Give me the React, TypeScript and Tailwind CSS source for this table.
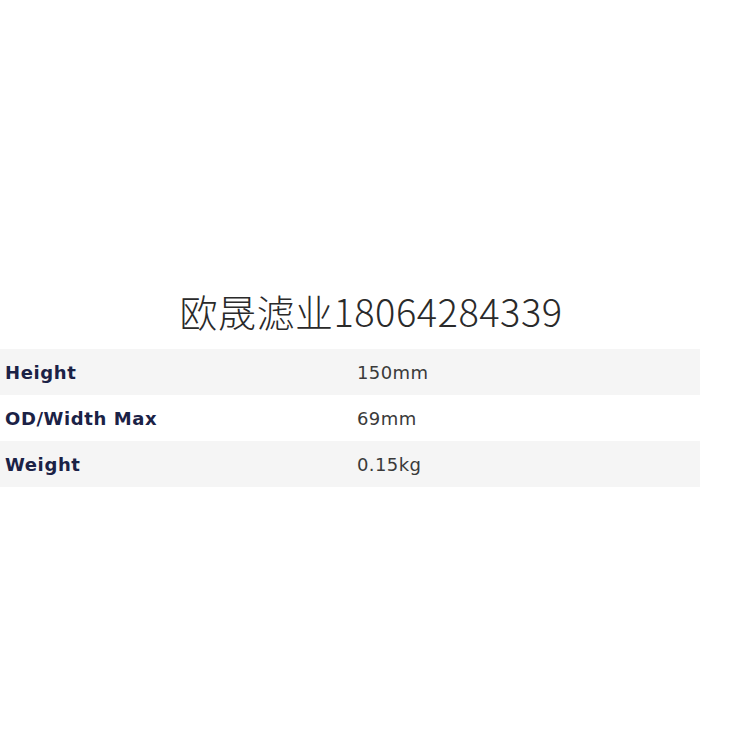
const specs = [
  { label: "Height", value: "150mm" },
  { label: "OD/Width Max", value: "69mm" },
  { label: "Weight", value: "0.15kg" },
];

export default function App() {
  return (
    <div className="h-[742px] w-[742px] overflow-hidden bg-white pt-[283px]">
      {/* watermark */}
      <p
        className="text-center text-[38px] font-light leading-[56px] tracking-[0.5px] text-[#2a2a2a]"
        style={{ fontFamily: '"Noto Sans CJK SC", sans-serif' }}
      >
        欧晟滤业18064284339
      </p>

      <table
        className="mt-[10px] w-[700px] border-collapse"
        style={{ fontFamily: '"DejaVu Sans", sans-serif' }}
      >
        <tbody>
          {specs.map((row, i) => (
            <tr key={row.label} className={i % 2 === 0 ? "bg-[#f5f5f5]" : "bg-white"}>
              <td className="h-[46px] w-[352px] pl-[5px] text-[18px] font-bold tracking-[0.6px] text-[#1b2246]">
                {row.label}
              </td>
              <td className="h-[46px] pl-[5px] text-[18px] tracking-[0.4px] text-[#3a3a3a]">
                {row.value}
              </td>
            </tr>
          ))}
        </tbody>
      </table>
    </div>
  );
}
